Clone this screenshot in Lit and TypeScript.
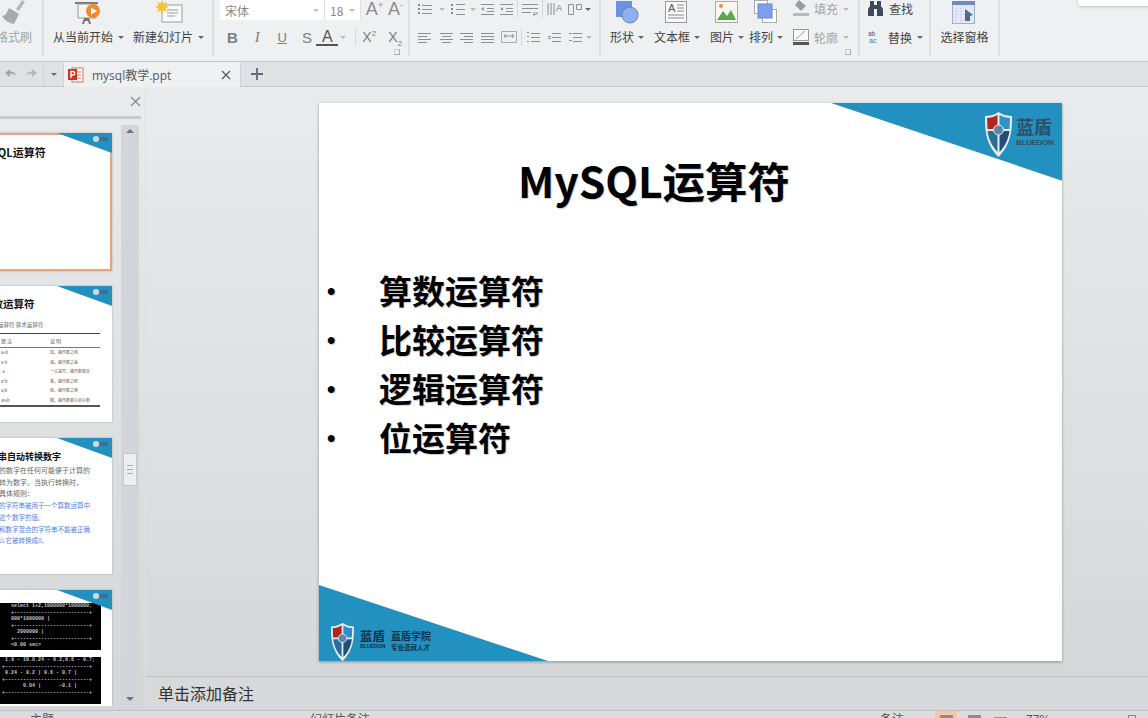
import { LitElement, css, html, svg } from 'lit'
import { customElement } from 'lit/decorators.js'

const BLUE = '#2291bf'

// small paragraph icons, all built out of horizontal lines
const lines = (w: number, rows: number[][], extra = svg``) => html`<svg width=${w} height="14" viewBox="0 0 ${w} 14">
  ${rows.map(
    ([x1, y, x2]) => svg`<line x1=${x1} y1=${y + 0.5} x2=${x2} y2=${y + 0.5} stroke="#8b9094" stroke-width="1" />`,
  )}
  ${extra}
</svg>`

const dots = svg`<rect x="0" y="2" width="2" height="2" fill="#7d8a96" /><rect x="0" y="6" width="2" height="2" fill="#7d8a96" /><rect x="0" y="10" width="2" height="2" fill="#7d8a96" />`
const arrow = svg`<path d="M0 7l3-2v4z" fill="#7fa0c0" />`

const shield = (w: number) => html`<svg width=${w} viewBox="0 0 27 45">
  <path d="M13.5 0C9 3 4 4 0 4c0 13 0 27 13.5 41C27 31 27 17 27 4c-4 0-9-1-13.5-4z" fill="#e8edf0" />
  <path d="M12.5 3C9 5 5 6 2 6l.5 11h10z" fill="#b3261e" />
  <path d="M14.5 3c3.500 2 7 3 10.500 3l-.5 11h-10z" fill="#2f8fc7" />
  <path d="M2.500 19h10v21C6 33 3.500 26 2.500 19z" fill="#2a6d9c" />
  <path d="M14.500 19h10c-1 7-3.500 14-10 21z" fill="#1f4f78" />
  <circle cx="13.500" cy="18" r="5" fill="#5d87a8" stroke="#e8edf0" />
</svg>`

@customElement('app-root')
export class AppRoot extends LitElement {
  static styles = css`
    :host {
      display: block;
      position: relative;
      width: 1148px;
      height: 718px;
      overflow: hidden;
      background: #e9ebed;
      font-family: 'Noto Sans CJK SC', 'Noto Sans', sans-serif;
      color: #444;
    }
    svg {
      display: block;
      flex: none;
    }

    /* ribbon */
    .ribbon {
      display: flex;
      height: 61px;
      background: #eef0f1;
      border-bottom: 1px solid #c4c6c9;
      font-size: 12px;
    }
    .group {
      position: relative;
      display: flex;
      flex: none;
      height: 56px;
      box-sizing: border-box;
      border-right: 2px solid #dcdee0;
    }
    .g-paint {
      width: 44px;
    }
    .g-slide {
      width: 170px;
      padding-left: 9px;
      gap: 9px;
    }
    .g-font {
      width: 196px;
      padding-left: 6px;
      flex-direction: column;
    }
    .g-para {
      width: 191px;
      padding-left: 8px;
      flex-direction: column;
    }
    .g-insert {
      width: 259px;
      padding-left: 9px;
    }
    .g-find {
      width: 71px;
      padding-left: 8px;
      flex-direction: column;
    }
    .g-pane {
      width: 69px;
      justify-content: center;
    }
    .big {
      display: flex;
      flex-direction: column;
      align-items: center;
    }
    .big-icon {
      height: 28px;
      display: flex;
      align-items: flex-start;
    }
    .paint {
      margin-left: -4px;
    }
    .label {
      display: flex;
      align-items: center;
      height: 18px;
      line-height: 18px;
      white-space: nowrap;
    }
    .g-insert .caret {
      margin-left: 4px;
    }
    .off {
      color: #a2a5a8;
    }
    .caret {
      display: inline-block;
      width: 0;
      height: 0;
      margin-left: 5px;
      border: 3px solid transparent;
      border-top: 3px solid #666;
      border-bottom: 0;
    }
    .caret.dim {
      border-top-color: #bbb;
    }
    .top-row {
      display: flex;
      align-items: flex-start;
      height: 28px;
    }
    .bottom-row {
      display: flex;
      align-items: center;
      height: 18px;
    }
    .cell {
      display: flex;
      justify-content: center;
      align-items: center;
      flex: none;
      height: 18px;
    }
    .bar {
      width: 1px;
      height: 18px;
      background: #d5d7d9;
      margin: 0 4px;
      flex: none;
    }
    .combo {
      display: flex;
      align-items: center;
      justify-content: space-between;
      box-sizing: border-box;
      height: 20px;
      background: #fff;
      padding: 0 5px;
      color: #888;
      border-right: 1px solid #dfe1e3;
      flex: none;
    }
    .combo-face {
      width: 105px;
    }
    .combo-size {
      width: 36px;
      margin-right: 3px;
    }
    .grow {
      font: 18px 'Liberation Sans', sans-serif;
      color: #8a8d90;
      position: relative;
      width: 21px;
      text-align: center;
      line-height: 18px;
    }
    .grow sup {
      font-size: 9px;
      line-height: 0;
    }
    .fmt {
      width: 25px;
      font: bold 15px 'Liberation Sans', sans-serif;
      color: #7a7e82;
      text-align: center;
    }
    .fmt.i {
      font-weight: normal;
      font-style: italic;
      font-family: 'Liberation Serif', serif;
    }
    .fmt.u {
      font-weight: normal;
      font-size: 13px;
      text-decoration: underline;
    }
    .fmt.s {
      font-weight: normal;
    }
    .fmt.a {
      width: 22px;
      margin-left: -3px;
      color: #555;
      border-bottom: 2px solid #555;
      line-height: 15px;
      font-weight: normal;
      font-size: 16px;
    }
    .fmt.a + .caret {
      margin-left: 2px;
    }
    .fmt.a + .caret + .bar {
      margin: 0 0 0 9px;
    }
    .fmt.sc {
      width: 26px;
      font-weight: normal;
      font-size: 14px;
    }
    .fmt sup,
    .fmt sub {
      font-size: 8px;
      line-height: 0;
    }
    .launch {
      position: absolute;
      right: 8px;
      bottom: 1px;
      width: 4px;
      height: 4px;
      border: 1px solid #aaa;
      border-top-color: #ccc;
      border-left-color: #ccc;
    }
    .col-small {
      display: flex;
      flex-direction: column;
      margin-left: 10px;
      width: 62px;
    }
    .col-small .top-row,
    .g-find .top-row {
      gap: 4px;
      align-items: flex-start;
      line-height: 18px;
    }
    .g-find .top-row {
      gap: 6px;
    }
    .notice {
      position: absolute;
      top: -10px;
      left: 1078px;
      width: 90px;
      height: 16px;
      background: #fff;
      border-radius: 3px;
      box-shadow: 0 1px 3px rgba(0, 0, 0, 0.2);
    }

    /* tabs */
    .tabs {
      display: flex;
      height: 24px;
      background: #dfe1e4;
      border-bottom: 1px solid #c6c8cb;
      align-items: stretch;
    }
    .quick {
      display: flex;
      align-items: center;
      width: 64px;
      flex: none;
      color: #9a9da0;
    }
    .quick-sep {
      width: 1px;
      height: 100%;
      background: #cfd1d4;
    }
    .tab {
      display: flex;
      align-items: center;
      width: 177px;
      box-sizing: border-box;
      height: 25px;
      padding: 0 5px 0 4px;
      background: #eef0f1;
      border-right: 1px solid #cfd1d4;
      font: 12px 'Open Sans', 'Noto Sans CJK SC', sans-serif;
      color: #565a5e;
      flex: none;
    }
    .tab-name {
      margin-left: 8px;
      flex: 1;
      white-space: nowrap;
    }
    .plus {
      margin-left: 9px;
      align-self: center;
    }

    /* body */
    .body {
      display: flex;
      height: 623px;
      background: linear-gradient(#e9ebed, #d5d6d8);
    }
    .pane {
      position: relative;
      width: 146px;
      flex: none;
      box-sizing: border-box;
      border-right: 1px solid #dfe1e3;
      overflow: hidden;
    }
    .pane-head {
      height: 29px;
      width: 141px;
      border-bottom: 3px solid #c9cbce;
      display: flex;
      align-items: center;
      justify-content: flex-end;
      padding-right: 0;
    }
    .pane-body {
      display: flex;
      height: 591px;
    }
    .thumbs {
      flex: none;
      width: 122px;
      height: 587px;
      overflow: hidden;
      padding-top: 14px;
      box-sizing: border-box;
    }
    .thumb {
      position: relative;
      width: 182px;
      height: 136px;
      box-sizing: border-box;
      margin: 0 0 16px -70px;
      background: #fff;
      overflow: hidden;
      color: #111;
      box-shadow: 0 0 2px rgba(0, 0, 0, 0.25);
    }
    .thumb.on {
      height: 138px;
      outline: 2px solid #e8a477;
      outline-offset: -2px;
      margin-bottom: 15px;
    }
    .thumb-corner {
      position: absolute;
      top: 0;
      right: 0;
    }
    .t-title {
      font-size: 10.500px;
      font-weight: 700;
      line-height: 14px;
    }
    .t1 {
      font-size: 11px;
      padding: 12px 21px 0 0;
      text-align: center;
    }
    .t2 {
      padding: 11px 0 0 52px;
    }
    .t2-sub {
      font-size: 5.500px;
      line-height: 10px;
      color: #666;
      margin: 9px 0 3px 0;
      padding-left: 16px;
      white-space: nowrap;
    }
    .t2-table {
      width: 118px;
      border-top: 1px solid #444;
      border-bottom: 2px solid #555;
      font-size: 4px;
      color: #555;
    }
    .t2-row {
      display: grid;
      grid-template-columns: 49px 1fr;
      height: 9.500px;
      line-height: 9.500px;
      padding-left: 19px;
      white-space: nowrap;
    }
    .t2-row.head {
      height: 13px;
      line-height: 13px;
      font-size: 5px;
      border-bottom: 1px solid #777;
    }
    .t3 {
      padding: 12px 0 0 0;
      white-space: nowrap;
    }
    .t3 .t-title {
      font-size: 9px;
      padding-left: 50px;
      margin-bottom: 1px;
    }
    .t3-line {
      font-size: 7px;
      line-height: 11.700px;
      padding-left: 69px;
      color: #666;
    }
    .t3-line.blue {
      color: #4f83e0;
      font-size: 6.500px;
    }
    .t4 {
      padding-top: 13px;
    }
    .console {
      width: 171px;
      height: 47px;
      margin-bottom: 7px;
      background: #000;
      color: #c8c8c8;
      font: bold 5px/6.500px 'Liberation Mono', monospace;
      white-space: pre;
      overflow: hidden;
      text-align: right;
      padding-right: 6px;
      box-sizing: border-box;
    }
    .track {
      position: relative;
      flex: none;
      width: 18px;
      height: 580px;
      margin: 6px 0 0 -1px;
      background: #d3d5da;
    }
    .track-up,
    .track-down {
      position: absolute;
      left: 5px;
      width: 0;
      height: 0;
      border: 4px solid transparent;
    }
    .track-up {
      top: 4px;
      border-bottom: 4px solid #6d7278;
      border-top: 0;
    }
    .track-down {
      bottom: 4px;
      border-top: 4px solid #6d7278;
      border-bottom: 0;
    }
    .track-thumb {
      position: absolute;
      top: 328px;
      left: 2px;
      width: 14px;
      height: 33px;
      box-sizing: border-box;
      background: #eceef0;
      border: 1px solid #c4c6ca;
      padding: 11px 3px 0;
    }
    .track-thumb i {
      display: block;
      height: 1px;
      margin-bottom: 3px;
      background: #a9acb0;
    }
    .main {
      flex: 1;
      display: flex;
      flex-direction: column;
    }
    .canvas {
      height: 590px;
      box-sizing: border-box;
      padding: 16px 0 0 173px;
      border-bottom: 1px solid #bfc1c3;
    }
    .slide {
      position: relative;
      width: 743px;
      height: 558px;
      background: #fff;
      box-shadow: 0 1px 3px rgba(0, 0, 0, 0.35);
      color: #000;
      overflow: hidden;
    }
    .slide-art {
      position: absolute;
      inset: 0;
    }
    .slide-title {
      position: relative;
      width: 670px;
      padding-top: 47px;
      text-align: center;
      font-size: 42.500px;
      font-weight: 700;
      line-height: 60px;
      text-shadow: 1px 1px 1px rgba(0, 0, 0, 0.2);
    }
    .bullets {
      position: relative;
      margin: 56px 0 0;
      padding: 0;
      list-style: none;
    }
    .bullets li {
      display: flex;
      height: 49px;
      line-height: 49px;
      font-size: 33px;
      font-weight: 700;
      text-shadow: 1px 1px 1px rgba(0, 0, 0, 0.2);
    }
    .dot {
      width: 60px;
      padding-left: 8px;
      box-sizing: border-box;
      font: 700 24px/49px 'Liberation Sans', sans-serif;
    }
    .logo-top {
      position: absolute;
      top: 9px;
      left: 666px;
      display: flex;
      gap: 4px;
      color: #2f4f66;
    }
    .logo-bottom {
      position: absolute;
      top: 520px;
      left: 12px;
      display: flex;
      gap: 6px;
      color: #10324d;
    }
    .logo-name {
      font-size: 18px;
      font-weight: 700;
      line-height: 23px;
      letter-spacing: 0;
      white-space: nowrap;
      margin-top: 3px;
    }
    .logo-en {
      font: 700 8px/10px 'Liberation Sans', sans-serif;
      letter-spacing: -0.300px;
    }
    .logo-bottom .logo-name {
      font-size: 12.500px;
      line-height: 15px;
      margin-top: 5px;
    }
    .logo-bottom .logo-name.school {
      font-size: 10px;
    }
    .logo-bottom .logo-en {
      font-size: 5.500px;
      line-height: 7px;
    }
    .logo-bottom .logo-sub {
      font-size: 6.500px;
      font-weight: 700;
      line-height: 8px;
      white-space: nowrap;
    }

    /* notes + status */
    .notes {
      height: 32px;
      box-sizing: border-box;
      padding-left: 12px;
      background: #d8d9db;
      font-size: 16px;
      line-height: 32px;
      color: #333;
    }
    .status {
      position: relative;
      display: flex;
      align-items: flex-start;
      height: 8px;
      box-sizing: border-box;
      background: #dcdde0;
      border-top: 1px solid #bfc1c3;
      font-size: 12px;
      line-height: 16px;
      color: #555;
    }
    .st-left {
      margin-left: 30px;
      width: 280px;
    }
    .st-mid {
      width: 570px;
    }
    .st-right {
      width: 55px;
    }
    .st-view {
      width: 22px;
      height: 8px;
      flex: none;
      display: flex;
      justify-content: center;
      align-items: flex-start;
    }
    .st-view.on {
      background: #f5c7a5;
    }
    .st-view + .st-view {
      margin-left: 6px;
    }
    .st-view.fire {
      margin-left: 4px;
    }
    .st-view i {
      display: block;
      margin-top: 4px;
      width: 13px;
      height: 6px;
      background: #8a8d90;
    }
    .st-view.fire i {
      background: #e87b2c;
      margin-top: 6px;
    }
    .st-zoom {
      margin-left: 15px;
    }
    .st-box {
      width: 6px;
      height: 6px;
      margin: 4px 0 0 78px;
      border: 1px solid #888;
    }
  `

  private renderRibbon() {
    const caret = html`<span class="caret"></span>`
    return html`
      <div class="ribbon">
        <div class="group g-paint">
          <div class="big off paint">
            <div class="big-icon">
              <svg width="30" height="25" viewBox="0 0 30 25">
                <path d="M23 0l3 2-6 9-3-2z" fill="#b5b7ba" />
                <path d="M10 8l10 6-5 10c-5-1-9-3-12-8 3 0 5-3 7-8z" fill="#a7a9ac" />
              </svg>
            </div>
            <div class="label">格式刷</div>
          </div>
        </div>

        <div class="group g-slide">
          <div class="big">
            <div class="big-icon">
              <svg width="30" height="25" viewBox="0 0 30 25">
                <rect x="1" y="2" width="23" height="2" fill="#777" />
                <path d="M4 4h18v14H4z" fill="#f4f4f4" stroke="#999" />
                <path d="M10 18h5l2 6h-2l-1-3h-3l-1 3H8z" fill="#777" />
                <circle cx="19" cy="11" r="7" fill="#ef8b2a" />
                <path d="M17 7.500l6 3.500-6 3.500z" fill="#fff" />
              </svg>
            </div>
            <div class="label">从当前开始${caret}</div>
          </div>
          <div class="big">
            <div class="big-icon">
              <svg width="30" height="25" viewBox="0 0 30 25">
                <rect x="8" y="5" width="20" height="17" fill="#fafafa" stroke="#9a9da0" />
                <path d="M13 10h11M13 13h11M13 16h8" stroke="#9a9da0" />
                <path d="M8 0l1.500 3.500L13 2l-1.500 3.500L15 7l-3.500 1.500L13 12l-3.500-1.500L8 14l-1.500-3.500L3 12l1.500-3.500L1 7l3.500-1.500L3 2l3.500 1.500z" fill="#f4c430" />
              </svg>
            </div>
            <div class="label">新建幻灯片${caret}</div>
          </div>
        </div>

        <div class="group g-font">
          <div class="top-row">
            <div class="combo combo-face">宋体<span class="caret dim"></span></div>
            <div class="combo combo-size">18<span class="caret dim"></span></div>
            <div class="grow">A<sup>+</sup></div>
            <div class="grow">A<sup>-</sup></div>
          </div>
          <div class="bottom-row">
            <span class="fmt">B</span>
            <span class="fmt i">I</span>
            <span class="fmt u">U</span>
            <span class="fmt s">S</span>
            <span class="fmt a">A</span>
            <span class="caret dim"></span>
            <span class="bar"></span>
            <span class="fmt sc">X<sup>2</sup></span>
            <span class="fmt sc">X<sub>2</sub></span>
          </div>
          <span class="launch"></span>
        </div>

        <div class="group g-para">
          <div class="top-row">
            <div class="cell">${lines(14, [[4, 3, 14], [4, 7, 14], [4, 11, 14]], dots)}</div>
            <div class="cell" style="width:19px"><span class="caret dim" style="margin:0"></span></div>
            <div class="cell">${lines(14, [[5, 2, 14], [5, 7, 14], [5, 12, 14]], dots)}</div>
            <div class="cell" style="width:16px"><span class="caret dim" style="margin:0"></span></div>
            <div class="cell">${lines(13, [[0, 2, 13], [6, 6, 13], [6, 9, 13], [0, 12, 13]], arrow)}</div>
            <div class="cell" style="width:6px"></div>
            <div class="cell">${lines(13, [[0, 2, 13], [6, 6, 13], [6, 9, 13], [0, 12, 13]], arrow)}</div>
            <span class="bar"></span>
            <div class="cell">${lines(16, [[0, 2, 16], [0, 6, 16], [0, 10, 9]], svg`<path d="M15 10v2h-4m2-2l-2 2 2 2" fill="none" stroke="#7fa0c0" />`)}</div>
            <span class="bar"></span>
            <div class="cell">
              <svg width="16" height="14" viewBox="0 0 16 14">
                <path d="M1 1v12M4 1v12M7 1v12" stroke="#8b9094" />
                <text x="9" y="9" font-size="9" font-family="Liberation Sans" fill="#6f8296">A</text>
              </svg>
            </div>
            <div class="cell" style="width:5px"></div>
            <div class="cell">
              <svg width="14" height="14" viewBox="0 0 14 14">
                <path d="M.5 2.500h5v10h-5zM8.500 2.500h5v5h-5z" fill="none" stroke="#8b9094" />
              </svg>
            </div>
            <div class="cell" style="width:12px"><span class="caret" style="margin:0"></span></div>
          </div>
          <div class="bottom-row">
            <div class="cell">${lines(13, [[0, 3, 13], [0, 6, 9], [0, 9, 13], [0, 12, 9]])}</div>
            <div class="cell" style="width:9px"></div>
            <div class="cell">${lines(13, [[0, 3, 13], [2, 6, 11], [0, 9, 13], [2, 12, 11]])}</div>
            <div class="cell" style="width:7px"></div>
            <div class="cell">${lines(13, [[0, 3, 13], [4, 6, 13], [0, 9, 13], [4, 12, 13]])}</div>
            <div class="cell" style="width:8px"></div>
            <div class="cell">${lines(13, [[0, 3, 13], [0, 6, 13], [0, 9, 13], [0, 12, 13]])}</div>
            <div class="cell" style="width:7px"></div>
            <div class="cell">
              <svg width="16" height="14" viewBox="0 0 16 14">
                <path d="M.5 1.500h15v11H.5z" fill="none" stroke="#a6a9ad" />
                <path d="M3 6h10M3 6l2-2M3 6l2 2M13 6l-2-2M13 6l-2 2" fill="none" stroke="#8b9094" />
              </svg>
            </div>
            <span class="bar"></span>
            <div class="cell">${lines(14, [[5, 3, 14], [5, 7, 14], [5, 11, 14], [1, 2, 3], [1, 6, 3], [1, 11, 3]])}</div>
            <div class="cell" style="width:7px"></div>
            <div class="cell">${lines(14, [[5, 3, 14], [5, 7, 14], [5, 11, 14], [1, 6, 4], [1, 8, 4]])}</div>
            <div class="cell" style="width:7px"></div>
            <div class="cell">${lines(14, [[5, 3, 14], [5, 7, 14], [5, 11, 14], [1, 3, 4], [1, 10, 4]])}</div>
            <div class="cell" style="width:14px"><span class="caret dim" style="margin:0"></span></div>
          </div>
        </div>

        <div class="group g-insert">
          <div class="big">
            <div class="big-icon">
              <svg width="24" height="24" viewBox="0 0 24 24">
                <rect x="1" y="1" width="16" height="16" fill="#6c93e2" />
                <circle cx="15" cy="15" r="8" fill="#8eb0ee" stroke="#5f88da" />
              </svg>
            </div>
            <div class="label">形状${caret}</div>
          </div>
          <div class="big" style="margin-left:10px">
            <div class="big-icon">
              <svg width="24" height="24" viewBox="0 0 24 24">
                <rect x=".5" y="1.500" width="21" height="21" fill="#fafafa" stroke="#999" />
                <text x="3" y="12" font-size="11" font-family="Liberation Sans" fill="#555">A</text>
                <path d="M12 5h7M12 8h7M12 11h7M3 15h16M3 18h16" stroke="#888" />
              </svg>
            </div>
            <div class="label">文本框${caret}</div>
          </div>
          <div class="big" style="margin-left:10px">
            <div class="big-icon">
              <svg width="24" height="24" viewBox="0 0 24 24">
                <rect x=".5" y="1.500" width="22" height="21" fill="#fbf7ef" stroke="#aaa" />
                <path d="M2 20l6-9 4 5 4-6 5 10z" fill="#5fa64a" />
                <circle cx="6" cy="6" r="2" fill="#ef8b4f" />
              </svg>
            </div>
            <div class="label">图片${caret}</div>
          </div>
          <div class="big" style="margin-left:5px">
            <div class="big-icon">
              <svg width="26" height="24" viewBox="0 0 26 24">
                <rect x="9.500" y="9.500" width="14" height="13" fill="#fff" stroke="#aaa" />
                <rect x="1.500" y=".5" width="13" height="13" fill="#fff" stroke="#aaa" />
                <rect x="5" y="4" width="14" height="14" fill="#7d9ff0" stroke="#6286d8" />
              </svg>
            </div>
            <div class="label">排列${caret}</div>
          </div>
          <div class="col-small off">
            <div class="top-row">
              <svg width="17" height="16" viewBox="0 0 17 16">
                <path d="M6 0l7 6-5 5-6-6z" fill="#9a9ca0" />
                <rect x="0" y="13" width="16" height="3" fill="#b8babc" />
              </svg>
              <span>填充</span><span class="caret dim" style="margin:8px 0 0 1px"></span>
            </div>
            <div class="bottom-row" style="gap:4px">
              <svg width="17" height="16" viewBox="0 0 17 16">
                <rect x=".5" y=".5" width="15" height="11" fill="#fafafa" stroke="#999" />
                <path d="M3 10l9-8" stroke="#999" />
                <rect x="0" y="13" width="16" height="3" fill="#555" />
              </svg>
              <span>轮廓</span><span class="caret dim" style="margin:0 0 0 1px"></span>
            </div>
          </div>
          <span class="launch" style="right:7px"></span>
        </div>

        <div class="group g-find">
          <div class="top-row">
            <svg width="15" height="15" viewBox="0 0 15 15" style="margin-top:1px">
              <path d="M2 0h4v4h3V0h4v5l2 3v7H9V8H6v7H0V8l2-3z" fill="#3d4a5c" />
            </svg>
            <span>查找</span>
          </div>
          <div class="bottom-row" style="gap:5px">
            <svg width="15" height="14" viewBox="0 0 15 14">
              <text x="0" y="6" font-size="6.500" font-family="Liberation Sans" fill="#555">ab</text>
              <text x="1" y="13" font-size="7" font-family="Liberation Sans" fill="#3f7fb5">ac</text>
            </svg>
            <span>替换</span><span class="caret" style="margin-left:0"></span>
          </div>
        </div>

        <div class="group g-pane">
          <div class="big">
            <div class="big-icon">
              <svg width="24" height="24" viewBox="0 0 24 24">
                <rect x=".5" y="1.500" width="22" height="22" fill="#e3e8f7" stroke="#9fb0d8" />
                <rect x="0" y="1" width="23" height="4" fill="#7088c8" />
                <path d="M13 9l8 6-3 1v5h-5z" fill="#52688f" />
                <path d="M4 8v13M9 8v13" stroke="#aab4cc" stroke-dasharray="1 2" />
              </svg>
            </div>
            <div class="label">选择窗格</div>
          </div>
        </div>
      </div>
      <div class="notice"></div>
    `
  }

  private renderTabs() {
    return html`
      <div class="tabs">
        <div class="quick">
          <svg width="43" height="24" viewBox="0 0 43 24">
            <path d="M5 11l5-4v2.500c3 0 5 1 6 4-2-1.500-4-2-6-1.500V15z" fill="#a2a5a8" />
            <path d="M37 11l-5-4v2.500c-3 0-5 1-6 4 2-1.500 4-2 6-1.500V15z" fill="#b5b7ba" />
          </svg>
          <span class="quick-sep"></span>
          <div class="cell" style="width:19px;height:24px"><span class="caret" style="margin:0"></span></div>
          <span class="quick-sep"></span>
        </div>
        <div class="tab">
          <svg width="16" height="16" viewBox="0 0 16 16">
            <rect x="4" y="1" width="11" height="14" fill="#fff" stroke="#c9745a" />
            <path d="M9 5h4M9 8h4M9 11h4" stroke="#c9745a" />
            <rect x="0" y="2" width="9" height="11" fill="#c9381e" />
            <path d="M3 11V4.500h2a1.700 1.700 0 010 3.500H3" fill="none" stroke="#fff" stroke-width="1.300" />
          </svg>
          <span class="tab-name">mysql教学.ppt</span>
          <svg width="10" height="10" viewBox="0 0 10 10">
            <path d="M1 1l8 8M9 1l-8 8" stroke="#555" stroke-width="1.200" />
          </svg>
          <span style="width:4px"></span>
        </div>
        <svg class="plus" width="14" height="14" viewBox="0 0 14 14">
          <path d="M7 1v12M1 7h12" stroke="#5d6a78" stroke-width="1.800" />
        </svg>
      </div>
    `
  }

  private renderThumbCorner() {
    return html`<svg class="thumb-corner" width="55" height="20" viewBox="0 0 55 20">
      <path d="M0 0h55v20z" fill=${BLUE} />
      <circle cx="39" cy="6" r="3" fill="#cfd8de" />
      <path d="M43 4h8v4h-8z" fill="#3e6f8c" />
    </svg>`
  }

  private renderThumbs() {
    const rows = [
      ['a+b', '加，操作数之和'],
      ['a-b', '减，操作数之差'],
      ['-a', '一元减号，操作数取负'],
      ['a*b', '乘，操作数之积'],
      ['a/b', '除，操作数之商'],
      ['a%b', '模，操作数取余的余数'],
    ]
    return html`
      <div class="thumbs">
        <div class="thumb on">
          ${this.renderThumbCorner()}
          <div class="t1 t-title">MySQL运算符</div>
        </div>
        <div class="thumb">
          ${this.renderThumbCorner()}
          <div class="t2">
            <div class="t-title">算数运算符</div>
            <div class="t2-sub">运算符 算术运算符</div>
            <div class="t2-table">
              <div class="t2-row head"><span>算 法</span><span>说 明</span></div>
              ${rows.map(([a, b]) => html`<div class="t2-row"><span>${a}</span><span>${b}</span></div>`)}
            </div>
          </div>
        </div>
        <div class="thumb">
          ${this.renderThumbCorner()}
          <div class="t3">
            <div class="t-title">字符串自动转换数字</div>
            <div class="t3-line">的数字在任何可能便于计算的</div>
            <div class="t3-line">转为数字。当执行转换时，</div>
            <div class="t3-line">具体规则：</div>
            <div class="t3-line blue">的字符串被用于一个算数运算中</div>
            <div class="t3-line blue">这个数字的值。</div>
            <div class="t3-line blue">和数字混合的字符串不能被正确</div>
            <div class="t3-line blue">么它被转换成0。</div>
          </div>
        </div>
        <div class="thumb t4">
          ${this.renderThumbCorner()}
          <div class="console">${[
            'select 1+2,1000000*1000000; ',
            '+-------------------------+ ',
            '000*1000000 |               ',
            '+-------------------------+ ',
            '  2000000 |                 ',
            '+-------------------------+ ',
            '<0.00 sec>                  ',
          ].join('\n')}</div>
          <div class="console">${[
            ' 1.9 - 10.0.24 - 0.2,0.6 - 0.7;',
            '+----------------------------+ ',
            ' 0.24 - 0.2 | 0.6 - 0.7 |      ',
            '+----------------------------+ ',
            '       0.04 |      -0.1 |      ',
            '+----------------------------+ ',
          ].join('\n')}</div>
        </div>
      </div>
    `
  }

  private renderSlide() {
    return html`
      <div class="slide">
        <svg class="slide-art" width="743" height="558" viewBox="0 0 743 558">
          <path d="M512 0h232v78z" fill=${BLUE} />
          <path d="M0 482l229 76H0z" fill=${BLUE} />
        </svg>
        <div class="logo-top">
          ${shield(27)}
          <div>
            <div class="logo-name">蓝盾</div>
            <div class="logo-en">BLUEDON</div>
          </div>
        </div>
        <div class="logo-bottom">
          ${shield(23)}
          <div>
            <div class="logo-name">蓝盾</div>
            <div class="logo-en">BLUEDON</div>
          </div>
          <div>
            <div class="logo-name school">蓝盾学院</div>
            <div class="logo-sub">专业造就人才</div>
          </div>
        </div>
        <div class="slide-title">MySQL运算符</div>
        <ul class="bullets">
          ${['算数运算符', '比较运算符', '逻辑运算符', '位运算符'].map(
            (item) => html`<li><span class="dot">•</span><span>${item}</span></li>`,
          )}
        </ul>
      </div>
    `
  }

  render() {
    return html`
      ${this.renderRibbon()} ${this.renderTabs()}
      <div class="body">
        <div class="pane">
          <div class="pane-head">
            <svg width="11" height="11" viewBox="0 0 11 11">
              <path d="M1 1l9 9M10 1l-9 9" stroke="#85888c" stroke-width="1.200" />
            </svg>
          </div>
          <div class="pane-body">
            ${this.renderThumbs()}
            <div class="track">
              <span class="track-up"></span>
              <div class="track-thumb"><i></i><i></i><i></i></div>
              <span class="track-down"></span>
            </div>
          </div>
        </div>
        <div class="main">
          <div class="canvas">${this.renderSlide()}</div>
          <div class="notes">单击添加备注</div>
        </div>
      </div>
      <div class="status">
        <span class="st-left">主题</span>
        <span class="st-mid">幻灯片备注</span>
        <span class="st-right">备注</span>
        <span class="st-view on"><i></i></span>
        <span class="st-view"><i></i></span>
        <span class="st-view fire"><i></i></span>
        <span class="st-zoom">77%</span>
        <span class="st-box"></span>
      </div>
    `
  }
}
